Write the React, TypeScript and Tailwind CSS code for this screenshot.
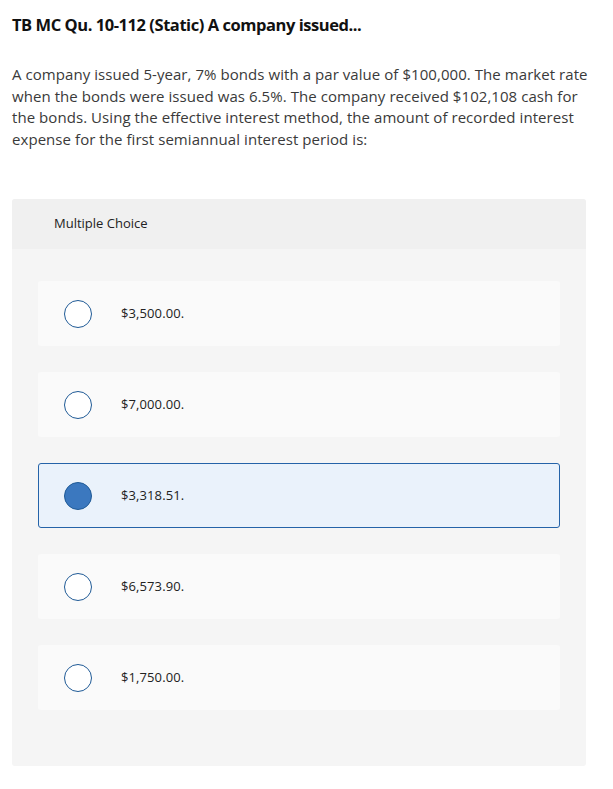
const options = [
  { id: 'a', label: '$3,500.00.' },
  { id: 'b', label: '$7,000.00.' },
  { id: 'c', label: '$3,318.51.' },
  { id: 'd', label: '$6,573.90.' },
  { id: 'e', label: '$1,750.00.' },
];

export default function App() {
  const selected = 'c';

  return (
    <div className="min-h-[789px] bg-white px-3 pt-[13px] text-[#1a1a1a] font-['Open_Sans',sans-serif]">
      <h1 className="text-[16.5px] font-bold leading-[24px] text-[#111] tracking-[-0.45px]">
        TB MC Qu. 10-112 (Static) A company issued...
      </h1>

      <p className="mt-[27px] text-[15px] leading-[21.5px] text-[#3a3a3a] tracking-[0.06px]">
        A company issued 5-year, 7% bonds with a par value of $100,000. The market rate
        <br />
        when the bonds were issued was 6.5%. The company received $102,108 cash for
        <br />
        the bonds. Using the effective interest method, the amount of recorded interest
        <br />
        expense for the first semiannual interest period is:
      </p>

      <div className="mt-[49px] w-[574px] rounded-[3px] bg-[#f5f5f5]">
        <div className="flex h-[50px] items-center rounded-t-[3px] bg-[#f0f0f0] pl-[42px] text-[13px] text-[#222]">
          Multiple Choice
        </div>
        <div className="flex flex-col gap-[26px] px-[26px] pb-[56px] pt-[32px]">
          {options.map(opt => {
            const isSel = opt.id === selected;
            return (
              <div
                key={opt.id}
                className={
                  isSel
                    ? 'flex h-[65px] items-center rounded-[3px] border border-[#2563a8] bg-[#eaf2fb] pl-[25px]'
                    : 'flex h-[65px] items-center rounded-[3px] border border-transparent bg-[#fafafa] pl-[25px]'
                }
              >
                <span
                  className={
                    isSel
                      ? 'h-[28px] w-[28px] shrink-0 rounded-full border border-[#1f5a96] bg-[#3b78bf]'
                      : 'h-[28px] w-[28px] shrink-0 rounded-full border-[1.5px] border-[#1f5a96] bg-white'
                  }
                />
                <span className="ml-[29px] text-[13px] text-[#222] tracking-[0.1px]">{opt.label}</span>
              </div>
            );
          })}
        </div>
      </div>
    </div>
  );
}
